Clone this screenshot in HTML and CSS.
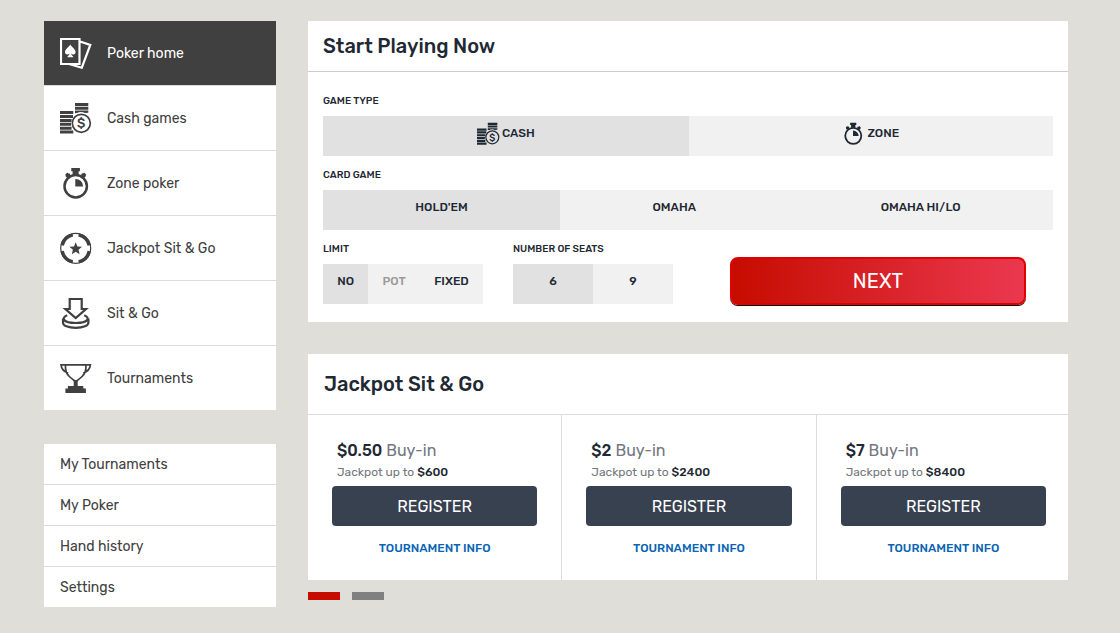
FILE: index.html
```html
<!DOCTYPE html>
<html lang="en">
<head>
<meta charset="utf-8">
<meta name="viewport" content="width=device-width, initial-scale=1">
<title>Poker</title>
<link rel="stylesheet" href="styles.css">
</head>
<body>
<svg class="sprite" aria-hidden="true">
  <symbol id="i-cards" viewBox="0 0 32 32">
    <path d="M1 2h18.500v25H1z M20 4.500 30.300 8 21.800 30.700 9 27" fill="none" stroke="currentColor" stroke-width="2.200"/>
    <path d="M10.300 7.500C9 10 5 12 5 15c0 2.600 3 3.300 4.400 1.600-.2 1.500-.8 2.200-1.900 2.800v.8h5.600v-.8c-1.100-.6-1.700-1.300-1.900-2.800 1.400 1.700 4.400 1 4.400-1.600 0-3-4-5-5.300-7.500z" fill="currentColor"/>
  </symbol>
  <symbol id="i-coins" viewBox="0 0 32 32">
    <path fill="currentColor" d="M15 1h13.300v3H15zM15 4.800h13.300v3H15zM15 8.600h13.300v2.200l-3.300.2c-2.500-1.200-5.500-1.200-8 0l-2 .2zM0 9.100h13.300v3H0zM0 13h13v3H0zM0 16.900h11.600v3H0zM0 20.800h11v3H0zM0 24.700h11.600v3H0zM0 28.600h13.300v3H0z"/>
    <circle cx="21.300" cy="21.300" r="9" fill="none" stroke="currentColor" stroke-width="1.700"/>
  </symbol>
  <symbol id="i-watch" viewBox="0 0 32 32">
    <circle cx="15.700" cy="19.300" r="11.200" fill="none" stroke="currentColor" stroke-width="2.500"/>
    <path fill="currentColor" d="M11.300 1h8.600v3.300h-1.300V8h-6V4.300h-1.300zM15.300 12a7.600 7.600 0 0 1 7.900 7.600h-7.900zM5.300 7.500l2-1.900 1 1 1.200-.4 1 2.400-3.300 2.200-1.300-1zM26.100 7.500l-2-1.900-1 1-1.200-.4-1 2.400 3.300 2.200 1.300-1z"/>
  </symbol>
  <symbol id="i-chip" viewBox="0 0 32 32">
    <circle cx="15.700" cy="16.300" r="15" fill="none" stroke="currentColor" stroke-width="1.200"/>
    <path d="M18.600 2.800A13.800 13.800 0 0 1 29.200 13.400M29.200 19.200A13.800 13.800 0 0 1 18.600 29.800M12.800 29.800A13.800 13.800 0 0 1 2.200 19.200M2.200 13.400A13.800 13.800 0 0 1 12.800 2.800" fill="none" stroke="currentColor" stroke-width="3.400"/>
    <path fill="currentColor" d="M15.700 10.200l1.700 4.300 4.600.3-3.500 3 1.100 4.500-3.900-2.500-3.900 2.500 1.100-4.500-3.500-3 4.600-.3z"/>
  </symbol>
  <symbol id="i-sit" viewBox="0 0 32 32">
    <g fill="none" stroke="currentColor" stroke-width="2.200">
      <path d="M9.700 2h12v10h4.300L15.700 21 5.400 12h4.300z"/>
      <path d="M7.200 18.200C1 20.700 2.500 26 15.700 26s14.700-5.300 8.500-7.800M3 21.500v4.200c0 2.800 5 5.200 12.700 5.200s12.700-2.400 12.700-5.200v-4.200"/>
    </g>
  </symbol>
  <symbol id="i-trophy" viewBox="0 0 32 32">
    <path d="M5.500 2.900h20.400v3c0 6.500-5 10-10.200 13.600C10.500 15.900 5.500 12.400 5.500 5.900zM6 2.900H1c.5 4.500 3.200 7 7.200 7.900M25.400 2.900h5c-.5 4.500-3.200 7-7.200 7.900" fill="none" stroke="currentColor" stroke-width="1.700"/>
    <path fill="currentColor" d="M13.700 18h4v6h5.600v2.500h2.600V31H5.400v-4.500h2.500V24h5.800z"/>
  </symbol>
</svg>

<div class="page">
  <aside class="sidebar">
    <nav class="nav" aria-label="Poker">
      <a class="nav-link is-active" href="#home" aria-current="page"><svg class="icon"><use href="#i-cards"/></svg>Poker home</a>
      <a class="nav-link" href="#cash"><svg class="icon" viewBox="0 0 32 32"><use href="#i-coins" width="32" height="32"/><text class="coin-sign" x="21.300" y="26" text-anchor="middle">$</text></svg>Cash games</a>
      <a class="nav-link" href="#zone"><svg class="icon"><use href="#i-watch"/></svg>Zone poker</a>
      <a class="nav-link" href="#jackpot"><svg class="icon"><use href="#i-chip"/></svg>Jackpot Sit &amp; Go</a>
      <a class="nav-link" href="#sitgo"><svg class="icon"><use href="#i-sit"/></svg>Sit &amp; Go</a>
      <a class="nav-link" href="#tournaments"><svg class="icon"><use href="#i-trophy"/></svg>Tournaments</a>
    </nav>
    <nav class="nav" aria-label="Account">
      <a class="nav-link nav-link-small" href="#my-tournaments">My Tournaments</a>
      <a class="nav-link nav-link-small" href="#my-poker">My Poker</a>
      <a class="nav-link nav-link-small" href="#history">Hand history</a>
      <a class="nav-link nav-link-small" href="#settings">Settings</a>
    </nav>
  </aside>

  <main class="content">
    <section class="panel">
      <h2 class="panel-title">Start Playing Now</h2>
      <form class="form">
        <fieldset class="field">
          <legend class="field-label">GAME TYPE</legend>
          <div class="options">
            <label class="option"><input type="radio" name="type" checked><svg class="icon icon-small" viewBox="0 0 32 32"><use href="#i-coins" width="32" height="32"/><text class="coin-sign" x="21.300" y="26" text-anchor="middle">$</text></svg>CASH</label>
            <label class="option"><input type="radio" name="type"><svg class="icon icon-small"><use href="#i-watch"/></svg>ZONE</label>
          </div>
        </fieldset>
        <fieldset class="field">
          <legend class="field-label">CARD GAME</legend>
          <div class="options">
            <label class="option"><input type="radio" name="game" checked>HOLD'EM</label>
            <label class="option"><input type="radio" name="game">OMAHA</label>
            <label class="option"><input type="radio" name="game">OMAHA HI/LO</label>
          </div>
        </fieldset>
        <div class="form-row">
          <fieldset class="field">
            <legend class="field-label">LIMIT</legend>
            <div class="options">
              <label class="option"><input type="radio" name="limit" checked>NO</label>
              <label class="option"><input type="radio" name="limit" disabled>POT</label>
              <label class="option"><input type="radio" name="limit">FIXED</label>
            </div>
          </fieldset>
          <fieldset class="field">
            <legend class="field-label">NUMBER OF SEATS</legend>
            <div class="options">
              <label class="option"><input type="radio" name="seats" checked>6</label>
              <label class="option"><input type="radio" name="seats">9</label>
            </div>
          </fieldset>
          <button class="next" type="button">NEXT</button>
        </div>
      </form>
    </section>

    <section class="jackpot">
      <div class="panel">
        <h2 class="panel-title panel-title-large">Jackpot Sit &amp; Go</h2>
        <div class="tiles">
          <article class="tile">
            <p class="buyin"><strong>$0.50</strong> Buy-in</p>
            <p class="prize">Jackpot up to <strong>$600</strong></p>
            <button class="register" type="button">REGISTER</button>
            <a class="info" href="#info-1">TOURNAMENT INFO</a>
          </article>
          <article class="tile">
            <p class="buyin"><strong>$2</strong> Buy-in</p>
            <p class="prize">Jackpot up to <strong>$2400</strong></p>
            <button class="register" type="button">REGISTER</button>
            <a class="info" href="#info-2">TOURNAMENT INFO</a>
          </article>
          <article class="tile">
            <p class="buyin"><strong>$7</strong> Buy-in</p>
            <p class="prize">Jackpot up to <strong>$8400</strong></p>
            <button class="register" type="button">REGISTER</button>
            <a class="info" href="#info-3">TOURNAMENT INFO</a>
          </article>
        </div>
      </div>
      <div class="pager">
        <button class="page-dot is-current" type="button" aria-label="Page 1"></button>
        <button class="page-dot" type="button" aria-label="Page 2"></button>
      </div>
    </section>
  </main>
</div>
</body>
</html>
```

FILE: styles.css
```css
* {
  box-sizing: border-box;
}

body {
  margin: 0;
  background: #dfded9;
  color: #1f2933;
  font-family: Rubik, Roboto, "Liberation Sans", sans-serif;
  font-size: 14px;
}

button {
  border: 0;
  font: inherit;
  cursor: pointer;
}

a {
  text-decoration: none;
}

.sprite {
  position: absolute;
  width: 0;
  height: 0;
}

.page {
  display: grid;
  grid-template-columns: 232px minmax(0, 1fr);
  gap: 32px;
  padding: 21px 52px 26px 44px;
}

.sidebar {
  display: flex;
  flex-direction: column;
  gap: 34px;
}

.nav {
  display: flex;
  flex-direction: column;
  gap: 1px;
  background: #dcdcdc;
}

.nav-link {
  display: flex;
  align-items: center;
  gap: 15px;
  height: 64px;
  padding: 0 16px;
  background: #fff;
  color: #404040;
  font-size: 14px;
}

.nav-link.is-active {
  background: #404040;
  color: #fff;
}

.nav-link-small {
  height: 40px;
}

.icon {
  flex: none;
  width: 32px;
  height: 32px;
}

.icon-small {
  width: 23px;
  height: 23px;
}

.coin-sign {
  fill: currentColor;
  font-size: 13px;
  font-weight: 500;
}

.content {
  display: flex;
  flex-direction: column;
  gap: 32px;
}

.panel {
  background: #fff;
  overflow: hidden;
}

.panel-title {
  margin: 0;
  padding: 0 15px;
  border-bottom: 1px solid #ccc;
  font-size: 20px;
  font-weight: 500;
  line-height: 50px;
}

.panel-title-large {
  padding: 0 16px;
  border-color: #dcdcdc;
  line-height: 60px;
}

.form {
  display: flex;
  flex-direction: column;
  gap: 11px;
  padding: 21px 15px 17px;
}

.field {
  min-width: 0;
  margin: 0;
  padding: 0;
  border: 0;
}

.field-label {
  padding: 0 0 7px;
  font-size: 10px;
  font-weight: 500;
  line-height: 16px;
}

.options {
  display: flex;
  height: 40px;
  background: #f1f1f1;
}

.option {
  position: relative;
  display: flex;
  flex: 1 1 auto;
  align-items: center;
  justify-content: center;
  gap: 2px;
  padding-bottom: 6px;
  font-size: 12px;
  font-weight: 500;
  cursor: pointer;
}

.option input {
  position: absolute;
  inset: 0;
  margin: 0;
  appearance: none;
  cursor: inherit;
}

.option:has(:checked) {
  background: #e1e1e1;
}

.option:has(:disabled) {
  color: #9a9a9a;
}

.form-row {
  display: grid;
  grid-template-columns: 160px 160px minmax(0, 1fr);
  align-items: start;
  gap: 30px;
}

.next {
  height: 48px;
  margin: 16px 27px 0;
  border: 2px solid #e00000;
  border-radius: 8px;
  background: linear-gradient(90deg, #c60c00, #eb384f);
  box-shadow: 0 1px 0 #000;
  color: #fff;
  font-size: 20px;
}

.tiles {
  display: flex;
}

.tile {
  display: flex;
  flex: 0 0 calc((100% + 3px) / 3);
  flex-direction: column;
  padding: 25px 24px 21px;
  border-right: 1px solid #dcdcdc;
  color: #73767d;
}

.tile strong {
  color: #1f2933;
  font-weight: 500;
}

.buyin,
.prize {
  margin: 0;
  padding: 0 5px;
}

.buyin {
  font-size: 16px;
  line-height: 22px;
}

.prize {
  padding-bottom: 4px;
  font-size: 12px;
  line-height: 20px;
}

.register {
  height: 40px;
  border-radius: 4px;
  background: #37414f;
  color: #fff;
  font-size: 16px;
}

.info {
  align-self: center;
  margin-top: 11px;
  color: #0864b4;
  font-size: 12px;
  font-weight: 500;
  line-height: 22px;
}

.pager {
  display: flex;
  gap: 12px;
  padding-top: 12px;
}

.page-dot {
  width: 32px;
  height: 8px;
  padding: 0;
  background: #808080;
}

.page-dot.is-current {
  background: #c60c00;
}
```
